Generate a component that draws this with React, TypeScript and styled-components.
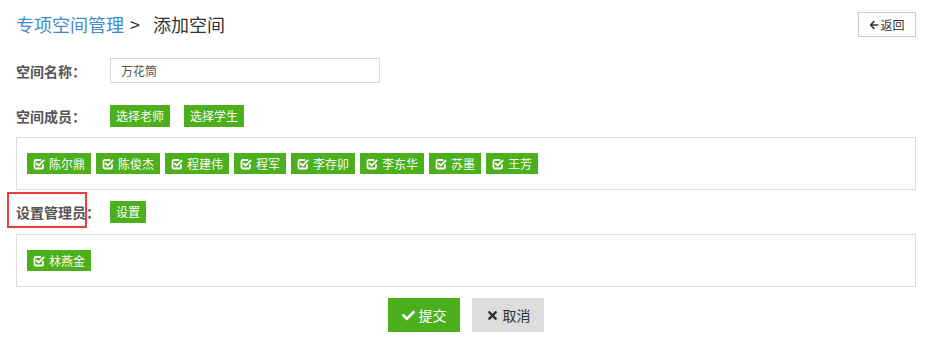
import styled, { createGlobalStyle } from "styled-components";
import { FaArrowLeft, FaCheck, FaTimes } from "react-icons/fa";

const GlobalStyle = createGlobalStyle`
  body {
    margin: 0;
    background: #fff;
    font-family: "Noto Sans CJK SC", "Liberation Sans", sans-serif;
    color: #555;
  }
`;

const Page = styled.div`
  width: 900px;
  padding: 12px 21px 0 16px;
`;

const Header = styled.div`
  display: flex;
  justify-content: space-between;
  align-items: center;
  height: 25px;

  h2 {
    margin: 0;
    font-size: 18px;
    font-weight: 400;
    color: #333;
    line-height: 25px;
    a {
      color: #428bca;
      text-decoration: none;
    }
    .sep {
      margin: 0 13px 0 6px;
    }
  }
`;

const BackButton = styled.button`
  height: 25px;
  width: 58px;
  padding: 0;
  border: 1px solid #ccc;
  background: #fff;
  color: #333;
  font-family: inherit;
  font-size: 12px;
  display: flex;
  align-items: center;
  justify-content: center;
  svg {
    font-size: 10px;
    margin-right: 1px;
  }
`;

const Row = styled.div<{ $top: number; $h: number }>`
  display: flex;
  align-items: center;
  margin-top: ${(p) => p.$top}px;
  height: ${(p) => p.$h}px;
`;

const Label = styled.label<{ $marked?: boolean }>`
  position: relative;
  width: 94px;
  flex-shrink: 0;
  font-size: 14px;
  font-weight: 700;
  color: #555;

  ${(p) =>
    p.$marked &&
    `
    &::before {
      content: "";
      position: absolute;
      left: -9px;
      top: -10px;
      width: 76px;
      height: 32px;
      border: 2px solid #ee3a3a;
    }
  `}
`;

const TextInput = styled.input`
  box-sizing: border-box;
  width: 270px;
  height: 25px;
  border: 1px solid #d9d9d9;
  padding: 0 10px;
  font-family: inherit;
  font-size: 12px;
  color: #555;
  outline: none;
`;

const GreenButton = styled.button`
  height: 22px;
  padding: 0 6px;
  margin-right: 14px;
  border: none;
  background: #4cb01c;
  color: #fff;
  font-family: inherit;
  font-size: 12px;
  line-height: 22px;
`;

const Box = styled.div<{ $top: number }>`
  margin-top: ${(p) => p.$top}px;
  border: 1px solid #ddd;
  padding: 15px 10px;
  display: flex;
  flex-wrap: wrap;
  gap: 5px;
`;

const Tag = styled.span`
  display: inline-flex;
  align-items: center;
  height: 21px;
  padding: 0 6px;
  background: #4cb01c;
  color: #fff;
  font-size: 12px;
  line-height: 21px;
  svg {
    width: 12px;
    height: 12px;
    margin-right: 4px;
  }
`;

const Actions = styled.div`
  margin-top: 11px;
  display: flex;
  justify-content: center;
  gap: 12px;
`;

const ActionButton = styled.button<{ $primary?: boolean }>`
  width: 72px;
  height: 34px;
  border: none;
  background: ${(p) => (p.$primary ? "#4cb01c" : "#ddd")};
  color: ${(p) => (p.$primary ? "#fff" : "#333")};
  font-family: inherit;
  font-size: 14px;
  display: flex;
  align-items: center;
  justify-content: center;
  svg {
    font-size: 13px;
    margin-right: 4px;
  }
`;

// check-square-o: rounded box with a check whose tail leaves the top-right corner
const CheckSquare = () => (
  <svg viewBox="0 0 12 12" fill="none" stroke="#fff" strokeLinecap="round" strokeLinejoin="round">
    <path d="M10 7v2.2a1.3 1.3 0 0 1-1.3 1.3H2.8a1.3 1.3 0 0 1-1.3-1.3V3.3A1.3 1.3 0 0 1 2.8 2H7.5" strokeWidth="1.8" />
    <path d="M3.8 5.6 5.7 7.5 10.6 2.6" strokeWidth="2" />
  </svg>
);

const members = ["陈尔鼎", "陈俊杰", "程建伟", "程军", "李存卯", "李东华", "苏墨", "王芳"];
const admins = ["林燕金"];

const App = () => {
  return (
    <Page>
      <GlobalStyle />
      <Header>
        <h2>
          <a href="#">专项空间管理</a>
          <span className="sep">&gt;</span>
          添加空间
        </h2>
        <BackButton>
          <FaArrowLeft />
          返回
        </BackButton>
      </Header>

      <Row $top={21} $h={25}>
        <Label>空间名称：</Label>
        <TextInput defaultValue="万花筒" />
      </Row>

      <Row $top={22} $h={22}>
        <Label>空间成员：</Label>
        <GreenButton>选择老师</GreenButton>
        <GreenButton>选择学生</GreenButton>
      </Row>

      <Box $top={10}>
        {members.map((m) => (
          <Tag key={m}>
            <CheckSquare />
            {m}
          </Tag>
        ))}
      </Box>

      <Row $top={11} $h={22}>
        <Label $marked>设置管理员：</Label>
        <GreenButton>设置</GreenButton>
      </Row>

      <Box $top={11}>
        {admins.map((m) => (
          <Tag key={m}>
            <CheckSquare />
            {m}
          </Tag>
        ))}
      </Box>

      <Actions>
        <ActionButton $primary>
          <FaCheck />
          提交
        </ActionButton>
        <ActionButton>
          <FaTimes />
          取消
        </ActionButton>
      </Actions>
    </Page>
  );
};

export default App;
